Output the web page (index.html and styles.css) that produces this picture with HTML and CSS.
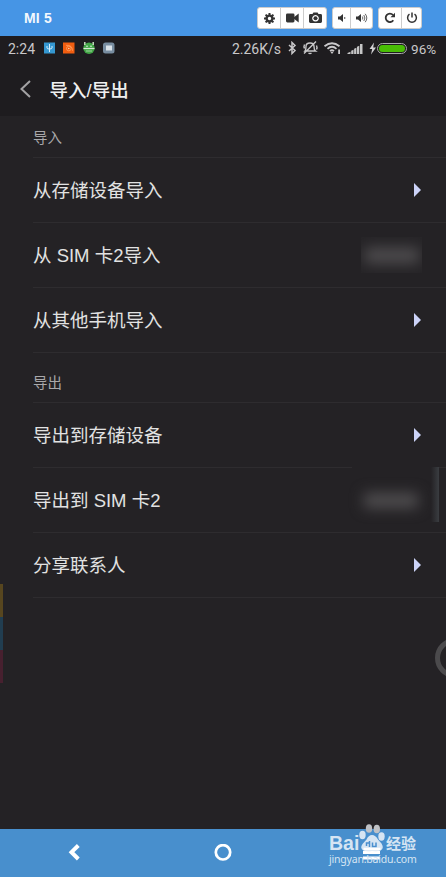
FILE: index.html
```
<!DOCTYPE html>
<html lang="zh-CN">
<head>
<meta charset="utf-8">
<title>导入/导出</title>
<link rel="stylesheet" href="styles.css">
</head>
<body>
<div class="window">
  <div class="toolbar">
    <span class="device">MI 5</span>
    <div class="tools">
      <div class="group">
        <span class="tool w22"><svg width="11" height="11" viewBox="0 0 11 11"><circle cx="5.5" cy="5.5" r="2.900" fill="none" stroke="#333" stroke-width="2.400"/><path d="M5.500 0v2M5.500 9v2M0 5.500h2M9 5.500h2M1.600 1.600l1.400 1.400M8 8l1.400 1.400M9.400 1.600L8 3M3 8L1.600 9.400" stroke="#333" stroke-width="2"/></svg></span>
        <span class="tool w23"><svg width="13" height="10" viewBox="0 0 13 10"><rect x="0" y="0.500" width="8.500" height="9" rx="1.400" fill="#333"/><path d="M7 5l5.700-4.500v9z" fill="#333"/></svg></span>
        <span class="tool w23"><svg width="13" height="12" viewBox="0 0 13 12"><path fill="#333" fill-rule="evenodd" d="M1.400 2H3.500L4.400.4h4.200L9.500 2h2.100Q13 2 13 3.400v6.200Q13 11 11.600 11H1.400Q0 11 0 9.600V3.400Q0 2 1.400 2zM6.500 3a3.300 3.300 0 1 0 .01 0z"/><circle cx="6.500" cy="6.300" r="2" fill="#333"/></svg></span>
      </div>
      <div class="group">
        <span class="tool w17"><svg width="10" height="10" viewBox="0 0 10 10"><path d="M1 3.500h2L6 1v8L3 6.500H1z" fill="#333"/><path d="M7.500 4q1 1 0 2" fill="none" stroke="#555"/></svg></span>
        <span class="tool w22"><svg width="13" height="10" viewBox="0 0 13 10"><path d="M1 3.500h2L6 1v8L3 6.500H1z" fill="#333"/><path d="M7.300 3.500q1.200 1.500 0 3M8.800 2q2.200 3 0 6M10.200.8q3.200 4.200 0 8.400" fill="none" stroke="#555" stroke-width=".9"/></svg></span>
      </div>
      <div class="group">
        <span class="tool w22"><svg width="12" height="12" viewBox="0 0 12 12"><path d="M9.300 8.300A4.200 4.200 0 1 1 9 3" fill="none" stroke="#333" stroke-width="1.800"/><path d="M11 .8v4.500H6.500z" fill="#333"/></svg></span>
        <span class="tool w20"><svg width="12" height="12" viewBox="0 0 12 12"><path d="M3.500 2.200a4.400 4.400 0 1 0 5 0M6 .5v5" fill="none" stroke="#333" stroke-width="1.500"/></svg></span>
      </div>
    </div>
  </div>

  <div class="statusbar">
    <span class="clock">2:24</span>
    <svg class="notices" width="72" height="13" viewBox="0 0 72 13">
      <rect x="0" y="0.500" width="11" height="11" fill="#3597d0"/><path d="M5.500 2v8M3 4v2q0 1 2.500 1t2.500-1v-2" fill="none" stroke="#d6edf9"/>
      <rect x="19" y="0.500" width="11.500" height="11" fill="#f05d10"/><path d="M22 3.300q6.500-.5 6.500 5.500" fill="none" stroke="#ffa15f" stroke-width=".8"/><circle cx="24.800" cy="6.500" r="2.300" fill="none" stroke="#ffa15f" stroke-width=".8"/><circle cx="24.800" cy="6.500" r=".8" fill="#ffd0ae"/>
      <circle cx="45" cy="6.300" r="5.700" fill="#43a747"/><path d="M40.800 0v3M49.200 0v3" stroke="#c4dfbd" stroke-width="1.500"/><path d="M39.500 6.500h11" stroke="#d6e8d2" stroke-width="1.200"/><circle cx="43" cy="4.200" r=".7" fill="#fff"/><circle cx="47" cy="4.200" r=".7" fill="#fff"/><path d="M42 9h6" stroke="#b6ddb4" stroke-width=".8"/>
      <rect x="59" y="0.500" width="11.500" height="11" rx="2.500" fill="#788da0"/><rect x="62" y="3.500" width="6" height="5" fill="#dbe3e9"/>
    </svg>
    <span class="speed">2.26K/s</span>
    <svg class="signals" width="90" height="15" viewBox="0 0 90 15">
      <g fill="none" stroke="#c9c8ca" stroke-width="1.500">
        <path d="M2 4l6 5.500-3 3V1.500l3 3-6 5.500"/>
        <path d="M18 10q1-1 1-4.500 0-3.500 4-3.500t4 3.500q0 3.500 1.500 4.500zM21.500 12q1.500 1.200 3 0M29 .5L17 12.500M17.500 3.500q-1 2 0 4M29.500 4.500q1 2 0 4" stroke-width="1.400"/>
        <path d="M37.500 5.200q7.500-6 15 0M40.500 7.800q4.500-4 9 0M43 10.200q2-1.800 4 0" stroke-width="1.800"/>
      </g>
      <path d="M43.500 11h3l-1.500 2zM51.200 8.500h1.800v4.500h-1.800z" fill="#c9c8ca"/>
      <path d="M60.500 13v-1l3-1.200V13zM64.200 13V9.800l2.300-1V13zM67.100 13V7.800l2.300-1V13zM70 13V5.800l2.300-1V13zM73 13V3h2.500v10z" fill="#c5c5c6"/>
      <path d="M87 1.500l-4.500 6.500h2.700L84 13.500l5-7h-2.800z" fill="#d2d1d3"/>
    </svg>
    <span class="battery"><span class="charge"></span></span>
    <span class="percent">96%</span>
  </div>

  <div class="header">
    <svg width="12" height="18" viewBox="0 0 12 18"><path d="M10 1L1.500 9l8.500 8" fill="none" stroke="#a3a2a4" stroke-width="2"/></svg>
    <h1>导入/导出</h1>
  </div>

  <div class="content">
    <h2 class="label first">导入</h2>
    <div class="row"><span>从存储设备导入</span><i class="arrow"></i></div>
    <div class="row"><span>从 SIM 卡2导入</span><i class="smudge clipped"><b></b></i></div>
    <div class="row"><span>从其他手机导入</span><i class="arrow"></i></div>
    <h2 class="label">导出</h2>
    <div class="row short"><span>导出到存储设备</span><i class="arrow"></i></div>
    <div class="row"><span>导出到 SIM 卡2</span><i class="smudge"><b></b></i></div>
    <div class="row"><span>分享联系人</span><i class="arrow"></i></div>
    <div class="swatches"><i class="gold"></i><i class="teal"></i><i class="wine"></i></div>
    <div class="edge"></div>
    <div class="ring"></div>
  </div>

  <div class="navbar">
    <div class="key"><svg width="12" height="18" viewBox="0 0 12 18"><path d="M10.300 1.500L3.500 8.200l6.800 6.800" fill="none" stroke="#fff" stroke-width="4"/></svg></div>
    <div class="key"><svg width="18" height="18" viewBox="0 0 18 18"><circle cx="9" cy="8.300" r="7.200" fill="none" stroke="#fff" stroke-width="2.700"/></svg></div>
    <div class="key"><svg width="17" height="18" viewBox="0 0 17 18"><path d="M0 3.500h17M0 8.500h17M0 14h17" stroke="#fff" stroke-width="3"/></svg></div>
    <div class="watermark">
      <div class="brand">
        <span class="bai">Bai</span>
        <svg width="28" height="30" viewBox="0 0 28 30"><g fill="#d6e5f3"><ellipse cx="4.500" cy="12" rx="3.200" ry="4.200"/><ellipse cx="11" cy="5.500" rx="3.200" ry="4.300" fill="#bfc1c5"/><ellipse cx="18.800" cy="6" rx="3.200" ry="4.300" fill="#bfc1c5"/><ellipse cx="23.500" cy="13.500" rx="3.200" ry="4.200"/><path d="M14 12q3.500 0 6 4.500l3.500 4q3 5-1 7-2 1-8.500.5-6.500.8-8.500-.5-4-2.300-1-6.500l4-4.500q2-4.500 5.500-4.500z"/></g><path d="M8.500 23v-3h2.500M11.500 18v6M14.500 19.500v4h3.500v-4" fill="none" stroke="#4a8fce" stroke-width="1.500"/><path d="M5.500 26h17" stroke="#fff" stroke-width="2.500"/></svg>
        <span class="jy">经验</span>
      </div>
      <div class="site">jingyan.baidu.com</div>
    </div>
  </div>
</div>
</body>
</html>
```
FILE: styles.css
```
* { box-sizing: border-box; }
body { margin: 0; background: #242225; font-family: "Liberation Sans", "Noto Sans CJK SC", sans-serif; }
svg { display: block; flex: none; }
h1, h2 { margin: 0; font-weight: 400; }
.window { width: 446px; height: 877px; display: flex; flex-direction: column; overflow: hidden; }

.toolbar { height: 36px; background: #4695e5; display: flex; align-items: center; justify-content: space-between; padding: 0 24px; }
.device { color: #f3f8fd; font-size: 14px; font-weight: 700; letter-spacing: .15px; }
.tools { display: flex; gap: 5px; }
.group { display: flex; height: 22px; background: #fff; border: 1px solid #ccc; border-radius: 3px; }
.tool { display: flex; flex: none; align-items: center; justify-content: center; }
.tool + .tool { border-left: 1px solid #ccc; }
.w17 { width: 17px; }
.w20 { width: 20px; }
.w22 { width: 22px; }
.w23 { width: 23px; }

.statusbar { height: 26px; background: #1e1c1f; color: #c9c8ca; display: flex; align-items: center; padding: 0 7px 1px 8px; font-family: Roboto, sans-serif; font-size: 14px; white-space: nowrap; }
.clock { width: 36px; }
.speed { margin-left: auto; }
.signals { margin-left: 6px; }
.battery { width: 30px; height: 11px; margin-left: 1px; padding: 1px; border: 1px solid #aaa; border-radius: 6px; display: flex; }
.charge { flex: 1; background: #49bd05; border-radius: 4px; }
.percent { margin-left: 4px; font-size: 13.500px; width: 27px; }
.signals + .battery { margin-left: 0; }
.statusbar .percent { width: 28px; letter-spacing: .1px; }

.header { height: 54px; background: #1e1c1f; display: flex; align-items: center; gap: 18px; padding: 0 20px; }
.header h1 { color: #f0f0f0; font-size: 18.500px; margin-left: -.5px; font-weight: 500; font-family: "Liberation Sans", "Noto Sans CJK SC", sans-serif; padding-bottom: 1px; }

.content { flex: 1; position: relative; background: #242225; }
.label { margin-left: 33px; height: 50px; border-bottom: 1px solid #2e2c2f; padding-top: 8px; display: flex; align-items: center; color: #a9a8aa; font-size: 14.500px; }
.label.first { height: 42px; padding: 0; }
.row { margin-left: 33px; height: 65px; border-bottom: 1px solid #2e2c2f; padding-right: 25px; display: flex; align-items: center; justify-content: space-between; color: #e2e2e2; font-size: 18.500px; }
.row span { padding-bottom: 2px; }
.row.short { border-image: linear-gradient(90deg, #2e2c2f 77%, #242225 77% 96.500%, #2e2c2f 96.500%) 1; border-width: 0 0 1px; }
.arrow { width: 7px; height: 14px; background: #ccd3f8; clip-path: polygon(0 0, 100% 50%, 0 100%); }
.smudge { width: 61px; height: 36px; display: flex; align-items: center; justify-content: center; }
.smudge b { width: 54px; height: 15px; background: #504e50; filter: blur(7px); flex: none; }
.clipped { overflow: hidden; background: #262427; margin-right: -1px; }
.swatches { position: absolute; left: 0; top: 468px; width: 3px; height: 99px; display: flex; flex-direction: column; }
.swatches i { flex: 1; }
.gold { background: #57461f; }
.teal { background: #213d50; }
.wine { background: #47202f; }
.edge { position: absolute; left: 431px; top: 351px; width: 8px; height: 55px; background: linear-gradient(90deg, #242225, #3a3d41); }
.ring { position: absolute; left: 435px; top: 522px; width: 40px; height: 40px; border: 5px solid #4b4a4c; border-radius: 50%; clip-path: inset(0 29px 0 0); }

.navbar { height: 48px; position: relative; background: #488fcd; display: grid; grid-template-columns: repeat(3, 1fr); }
.key { display: flex; align-items: center; justify-content: center; }
.watermark { position: absolute; left: 329px; top: -6px; width: 90px; color: #d6e5f3; }
.brand { display: flex; align-items: flex-end; height: 30px; }
.bai { width: 29px; font-size: 19.500px; font-weight: 700; line-height: 20px; height: 20px; }
.jy { font-family: "Noto Sans CJK SC", sans-serif; font-size: 15px; font-weight: 700; line-height: 20px; height: 20px; }
.site { font-family: "Noto Sans", sans-serif; font-size: 10.500px; line-height: 12px; letter-spacing: -.2px; white-space: nowrap; }
```
